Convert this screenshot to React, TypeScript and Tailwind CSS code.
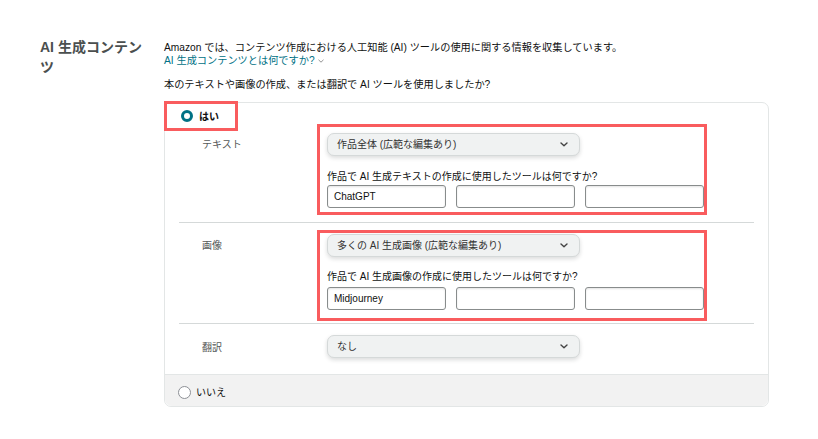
import React from "react";

const FONT = { fontFamily: '"Liberation Sans", "Noto Sans CJK JP", sans-serif' };

function Chevron() {
  return (
    <svg width="8" height="5" viewBox="0 0 8 5" className="shrink-0">
      <path d="M1 1l3 2.8L7 1" fill="none" stroke="#444" strokeWidth="1.4" strokeLinecap="round" strokeLinejoin="round" />
    </svg>
  );
}

function Dropdown({ value }: { value: string }) {
  return (
    <div className="w-[253px] h-[23px] flex items-center justify-between pl-[9px] pr-[11px] bg-[#f0f2f2] border border-[#d5d9d9] rounded-[7px] shadow-[0_2px_4px_rgba(15,17,17,0.15)] text-[10px] text-[#333]">
      <span>{value}</span>
      <Chevron />
    </div>
  );
}

function ToolInputs({ first }: { first: string }) {
  return (
    <div className="flex gap-[10px]">
      {[first, "", ""].map((v, i) => (
        <div
          key={i}
          className="w-[119px] h-[23px] flex items-center pl-[6px] border border-[#888c8c] rounded-[3px] shadow-[inset_0_1px_2px_rgba(15,17,17,0.12)] text-[10px] text-[#0f1111] bg-white"
        >
          {v}
        </div>
      ))}
    </div>
  );
}

export default function App() {
  return (
    <div className="w-[818px] h-[439px] bg-white pt-[37px] pl-[40px] flex" style={FONT}>
      <div className="w-[110px] mr-[14px] text-[14px] leading-[20px] font-bold text-[#4b4f4f]">
        AI 生成コンテンツ
      </div>

      <div className="w-[605px] pt-[4px]">
        <div className="text-[10.2px] leading-[13px] text-[#0f1111]">
          Amazon では、コンテンツ作成における人工知能 (AI) ツールの使用に関する情報を収集しています。
        </div>
        <div className="text-[10.2px] leading-[13px] text-[#007185] flex items-center gap-[3px]">
          AI 生成コンテンツとは何ですか?
          <svg width="6" height="4" viewBox="0 0 6 4">
            <path d="M0.5 0.8l2.5 2.4 2.5-2.4" fill="none" stroke="#888" strokeWidth="0.9" />
          </svg>
        </div>
        <div className="mt-[11px] text-[10.2px] leading-[13px] text-[#0f1111]">
          本のテキストや画像の作成、または翻訳で AI ツールを使用しましたか?
        </div>

        <div className="mt-[11px] border border-[#e3e6e6] rounded-[7px]">
          {/* はい */}
          <div className="h-[23px]">
            <div className="-ml-px -mt-[2px] w-[74px] h-[30px] border-[3px] border-[#f95c5e] flex items-center pl-[14px] gap-[6px] bg-white relative">
              <span className="w-[12px] h-[12px] rounded-full border-[3.5px] border-[#007185] bg-white" />
              <span className="text-[10px] font-bold text-[#0f1111]">はい</span>
            </div>
          </div>

          <div className="px-[14px]">
            {/* テキスト */}
            <div className="flex">
              <div className="w-[138px] pl-[23px] pt-[14px] text-[10px] leading-[13px] text-[#565959]">テキスト</div>
              <div className="w-[390px] border-[3px] border-[#f95c5e] pt-[6px] pl-[7px] pb-[4px]">
                <Dropdown value="作品全体 (広範な編集あり)" />
                <div className="mt-[14px] text-[10px] leading-[13px] text-[#0f1111]">
                  作品で AI 生成テキストの作成に使用したツールは何ですか?
                </div>
                <div className="mt-[2px]">
                  <ToolInputs first="ChatGPT" />
                </div>
              </div>
            </div>

            <div className="h-px bg-[#d5d9d9] mt-[7px]" />

            {/* 画像 */}
            <div className="flex mt-[7px]">
              <div className="w-[138px] pl-[23px] pt-[9px] text-[10px] leading-[13px] text-[#565959]">画像</div>
              <div className="w-[390px] border-[3px] border-[#f95c5e] pt-[1px] pl-[7px] pb-[8px]">
                <Dropdown value="多くの AI 生成画像 (広範な編集あり)" />
                <div className="mt-[13px] text-[10px] leading-[13px] text-[#0f1111]">
                  作品で AI 生成画像の作成に使用したツールは何ですか?
                </div>
                <div className="mt-[4px]">
                  <ToolInputs first="Midjourney" />
                </div>
              </div>
            </div>

            <div className="h-px bg-[#d5d9d9] mt-[2px]" />

            {/* 翻訳 */}
            <div className="flex pb-[16px]">
              <div className="w-[138px] pl-[23px] pt-[17px] text-[10px] leading-[13px] text-[#565959]">翻訳</div>
              <div className="pl-[10px] pt-[11px]">
                <Dropdown value="なし" />
              </div>
            </div>
          </div>

          {/* いいえ */}
          <div className="h-[32px] border-t border-[#e3e6e6] bg-[#f2f2f2] rounded-b-[7px] flex items-center pl-[13px] pt-[3px] gap-[5px]">
            <span className="w-[13px] h-[13px] rounded-full border border-[#8d9096] bg-white" />
            <span className="text-[10px] text-[#0f1111]">いいえ</span>
          </div>
        </div>
      </div>
    </div>
  );
}
